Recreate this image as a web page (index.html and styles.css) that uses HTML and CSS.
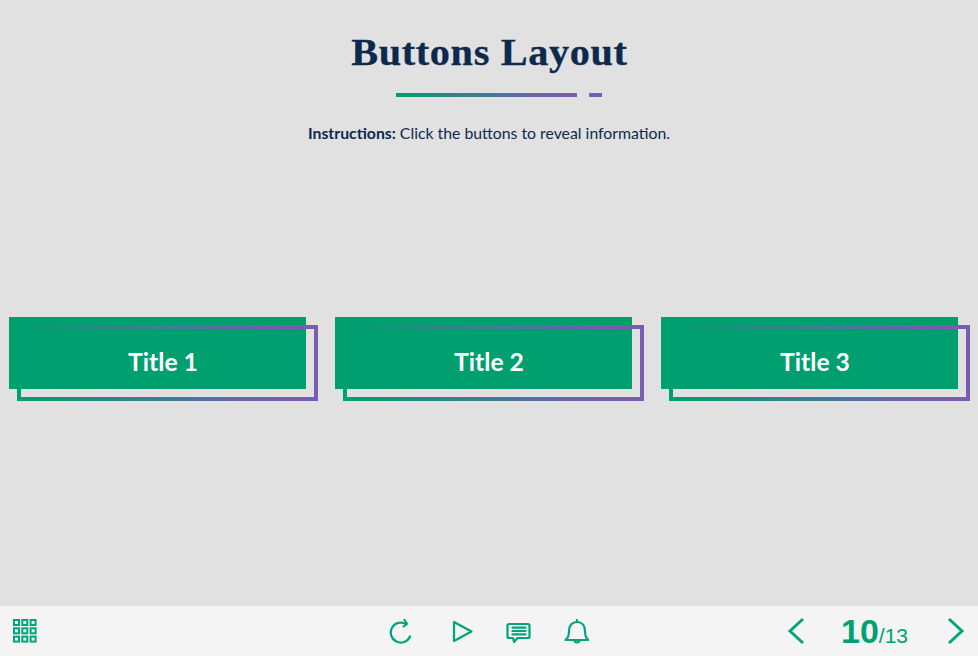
FILE: index.html
```html
<!DOCTYPE html>
<html lang="en">
<head>
<meta charset="utf-8">
<title>Buttons Layout</title>
<link rel="stylesheet" href="styles.css">
</head>
<body>
<main class="stage">
  <header class="head">
    <h1 class="title">Buttons Layout</h1>
    <div class="rule"><span class="rule-long"></span><span class="rule-short"></span></div>
    <p class="instructions"><strong>Instructions:</strong> Click the buttons to reveal information.</p>
  </header>
  <section class="buttons">
    <button class="card" type="button"><span class="card-frame"></span><span class="card-label">Title 1</span></button>
    <button class="card" type="button"><span class="card-frame"></span><span class="card-label">Title 2</span></button>
    <button class="card" type="button"><span class="card-frame"></span><span class="card-label">Title 3</span></button>
  </section>
</main>
<footer class="bar">
  <div class="bar-left">
    <svg class="icon" width="26" height="26" viewBox="0 0 26 26" fill="none" stroke="#00a678" stroke-width="2">
      <rect x="2" y="2" width="5" height="5"/><rect x="10.3" y="2" width="5" height="5"/><rect x="18.6" y="2" width="5" height="5"/>
      <rect x="2" y="10.3" width="5" height="5"/><rect x="10.3" y="10.3" width="5" height="5"/><rect x="18.6" y="10.3" width="5" height="5"/>
      <rect x="2" y="18.6" width="5" height="5"/><rect x="10.3" y="18.6" width="5" height="5"/><rect x="18.6" y="18.6" width="5" height="5"/>
    </svg>
  </div>
  <div class="bar-center">
    <svg class="icon" width="26" height="26" viewBox="0 0 26 26" fill="none" stroke="#00a678" stroke-width="2.2" stroke-linecap="round" stroke-linejoin="round">
      <path d="M21 18.500A10 10 0 1 1 17 6"/><path d="M15.500 2 18 5.800 14.500 8.500"/>
    </svg>
    <svg class="icon" width="26" height="26" viewBox="0 0 26 26" fill="none" stroke="#00a678" stroke-width="2.2" stroke-linecap="round" stroke-linejoin="round">
      <path d="M7 4V23L24.500 13.500Z"/>
    </svg>
    <svg class="icon" width="26" height="26" viewBox="0 0 26 26" fill="none" stroke="#00a678" stroke-width="2.2" stroke-linecap="round" stroke-linejoin="round">
      <path d="M4 6H23Q24.500 6 24.500 7.500V18.500Q24.500 20 23 20H12.500L9 24 8 20H4Q2.500 20 2.500 18.500V7.500Q2.500 6 4 6Z"/><path d="M7.500 9.700H20.500M7.500 13H20.500M7.500 16.300H20.500"/>
    </svg>
    <svg class="icon" width="26" height="26" viewBox="0 0 26 26" fill="none" stroke="#00a678" stroke-width="2.2" stroke-linecap="round" stroke-linejoin="round">
      <path d="M2.500 22C5.500 20 6 17 6 13C6 7.500 9 4 14 4S22 7.500 22 13C22 17 22.500 20 25.500 22Z"/><path d="M14 2V4M11.500 22A2.500 2.500 0 0 0 16.500 22"/>
    </svg>
  </div>
  <div class="bar-right">
    <svg class="icon" width="18" height="28" viewBox="0 0 18 28" fill="none" stroke="#00a678" stroke-width="3"><path d="M16 2 3 14 16 26"/></svg>
    <div class="pager"><span class="pager-now">10</span><span class="pager-total">/13</span></div>
    <svg class="icon" width="18" height="28" viewBox="0 0 18 28" fill="none" stroke="#00a678" stroke-width="3"><path d="M2 2 15 14 2 26"/></svg>
  </div>
</footer>
</body>
</html>
```
FILE: styles.css
```css
* { box-sizing: border-box; }
html, body { margin: 0; height: 100%; }
body {
  width: 978px;
  height: 656px;
  display: flex;
  flex-direction: column;
  overflow: hidden;
  background: #e1e1e1;
  font-family: "Lato", sans-serif;
  color: #0d2a4e;
}
.stage { flex: 1; display: flex; flex-direction: column; }
.head { display: flex; flex-direction: column; align-items: center; padding-top: 31px; }
.title {
  margin: 0;
  font-family: "Liberation Serif", serif;
  font-size: 38px;
  line-height: 43px;
  font-weight: 700;
  letter-spacing: 0.6px;
  transform: scaleX(1.06);
  -webkit-text-stroke: 0.3px #0d2a4e;
}
.rule { display: flex; gap: 12px; margin-top: 19px; padding-left: 19px; }
.rule-long { width: 181px; height: 4px; background: linear-gradient(to right, #009f6f, #7b5cb3 90%); }
.rule-short { width: 13px; height: 4px; background: #7b5cb3; }
.instructions { margin: 26px 0 0; font-size: 15.8px; line-height: 20px; }
.instructions strong { font-weight: 700; }
.buttons { display: flex; gap: 29px; padding-left: 9px; margin-top: 174px; }
.card {
  position: relative;
  width: 297px;
  height: 72px;
  padding: 0;
  border: 0;
  background: #009f6f;
  color: #fff;
  font-family: "Lato", sans-serif;
  font-size: 24.7px;
  font-weight: 700;
  text-align: center;
}
.card-frame {
  position: absolute;
  left: 8px;
  top: 8px;
  width: 301px;
  height: 76px;
  border: 4px solid;
  border-image: linear-gradient(to right, #009f6f, #7b5cb3 92%) 1;
}
.card-label { position: relative; display: block; padding: 18px 0 0 11px; line-height: 54px; }
.bar {
  height: 50px;
  flex: none;
  background: #f4f4f4;
  display: grid;
  grid-template-columns: 1fr auto 1fr;
  align-items: center;
}
.icon { display: block; flex: none; }
.bar-left { padding-left: 12px; }
.bar-center { display: flex; gap: 32px; align-items: center; }
.bar-right { display: flex; align-items: center; justify-content: flex-end; padding-right: 13px; }
.pager { width: 142px; padding-right: 3px; text-align: center; font-family: "Liberation Sans", sans-serif; color: #00a070; }
.pager-now { font-size: 34px; font-weight: 700; }
.pager-total { font-size: 21px; }
```
